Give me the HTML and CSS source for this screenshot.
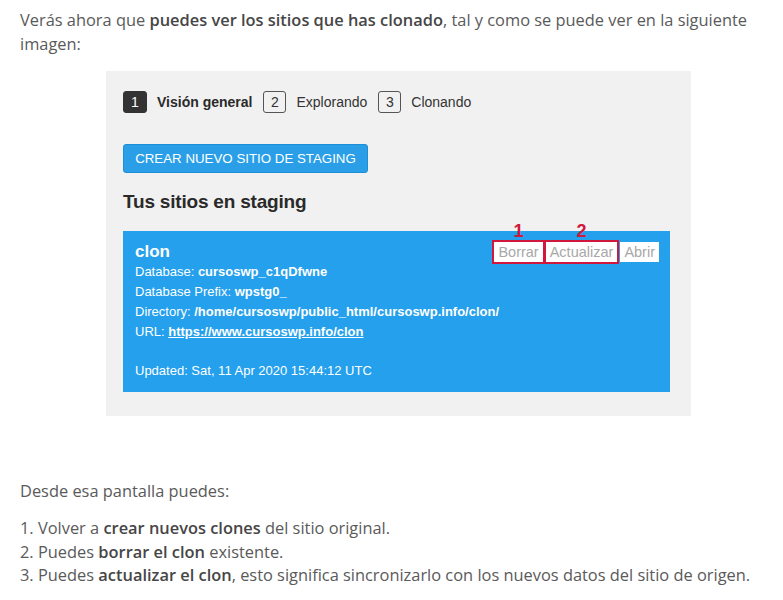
FILE: index.html
```html
<!DOCTYPE html>
<html lang="es">
<head>
<meta charset="utf-8">
<link rel="stylesheet" href="styles.css">
</head>
<body>
<div class="article">
  <p class="intro">Verás ahora que <b>puedes ver los sitios que has clonado</b>, tal y como se puede ver en la siguiente imagen:</p>
  <div class="shot">
    <div class="steps">
      <span class="num active">1</span><span class="label active">Visión general</span>
      <span class="num">2</span><span class="label">Explorando</span>
      <span class="num">3</span><span class="label">Clonando</span>
    </div>
    <div class="btn">CREAR NUEVO SITIO DE STAGING</div>
    <h2 class="sh">Tus sitios en staging</h2>
    <div class="card">
      <div class="card-head">
        <span class="name">clon</span>
        <div class="actions">
          <span class="act marked"><span class="mark">1</span>Borrar</span>
          <span class="act marked"><span class="mark">2</span>Actualizar</span>
          <span class="act">Abrir</span>
        </div>
      </div>
      <div class="row">Database: <b>cursoswp_c1qDfwne</b></div>
      <div class="row">Database Prefix: <b>wpstg0_</b></div>
      <div class="row">Directory: <b>/home/cursoswp/public_html/cursoswp.info/clon/</b></div>
      <div class="row">URL: <b class="u">https://www.cursoswp.info/clon</b></div>
      <div class="row upd">Updated: Sat, 11 Apr 2020 15:44:12 UTC</div>
    </div>
  </div>
  <p class="p2">Desde esa pantalla puedes:</p>
  <ol class="list">
    <li>Volver a <b>crear nuevos clones</b> del sitio original.</li>
    <li>Puedes <b>borrar el clon</b> existente.</li>
    <li>Puedes <b>actualizar el clon</b>, esto significa sincronizarlo con los nuevos datos del sitio de origen.</li>
  </ol>
</div>
</body>
</html>
```
FILE: styles.css
```css
html, body { margin: 0; padding: 0; background: #fff; }
.article {
  padding: 8px 20px 0 20px;
  font-family: "Open Sans", "Noto Sans", sans-serif;
  font-size: 16.4px;
  line-height: 24px;
  color: #5a5a5a;
}
.article b { color: #464646; font-weight: 600; }
.intro { margin: 0; }
.shot {
  margin: 15px 0 0 86px;
  width: 585px;
  height: 345px;
  box-sizing: border-box;
  background: #f1f1f1;
  padding: 20px 21px 0 17px;
  font-family: "Liberation Sans", Arial, sans-serif;
  color: #2b2b2b;
}
.steps { display: flex; align-items: center; height: 22px; font-size: 14px; }
.num {
  width: 23px; height: 22px; box-sizing: border-box; border: 1px solid #555; border-radius: 3px;
  display: flex; align-items: center; justify-content: center;
  font-size: 14px; color: #333; margin-right: 10px;
}
.num.active { background: #333; color: #fff; border-color: #333; width: 24px; }
.label { margin-right: 11px; color: #333; }
.label.active { font-weight: 700; color: #2a2a2a; }
.btn {
  margin-top: 31px;
  width: 245px; height: 29px; box-sizing: border-box;
  background: #2a9fe8; border: 1px solid #1e8ed6; border-radius: 3px;
  color: #fff; font-size: 13.3px; display: flex; align-items: center; justify-content: center;
}
.sh { margin: 17px 0 0 0; font-size: 19px; line-height: 24px; font-weight: 700; color: #2a2a2a; letter-spacing: -0.2px; }
.card {
  margin-top: 17px;
  width: 547px; height: 161px; box-sizing: border-box;
  background: #24a0ec; color: #fff;
  padding: 10px 11px 0 12px;
  font-size: 13px; line-height: 20px;
}
.card b { color: #fff; font-weight: 700; }
.card-head { display: flex; justify-content: space-between; align-items: flex-start; height: 21px; }
.name { font-size: 17px; font-weight: 700; line-height: 22px; }
.actions { display: flex; gap: 3px; margin-top: 1px; }
.act {
  position: relative;
  background: #fff; color: #a8a8a8; font-size: 14.5px; line-height: 17px;
  padding: 1px 4px; height: 20px; box-sizing: border-box;
  display: flex; align-items: center;
}
.act.marked { outline: 2px solid #d0173c; outline-offset: 0; padding: 1px 4px; }
.mark {
  position: absolute; top: -21px; left: 0; right: 0; text-align: center;
  color: #d0173c; font-weight: 700; font-size: 18px; line-height: 20px;
}
.row { white-space: nowrap; }
.u { text-decoration: underline; }
.upd { margin-top: 19px; }
.p2 { margin: 63px 0 0 0; }
.list { margin: 13px 0 0 0; padding-left: 0; list-style-position: inside; }
.list li { line-height: 23.5px; }
```
